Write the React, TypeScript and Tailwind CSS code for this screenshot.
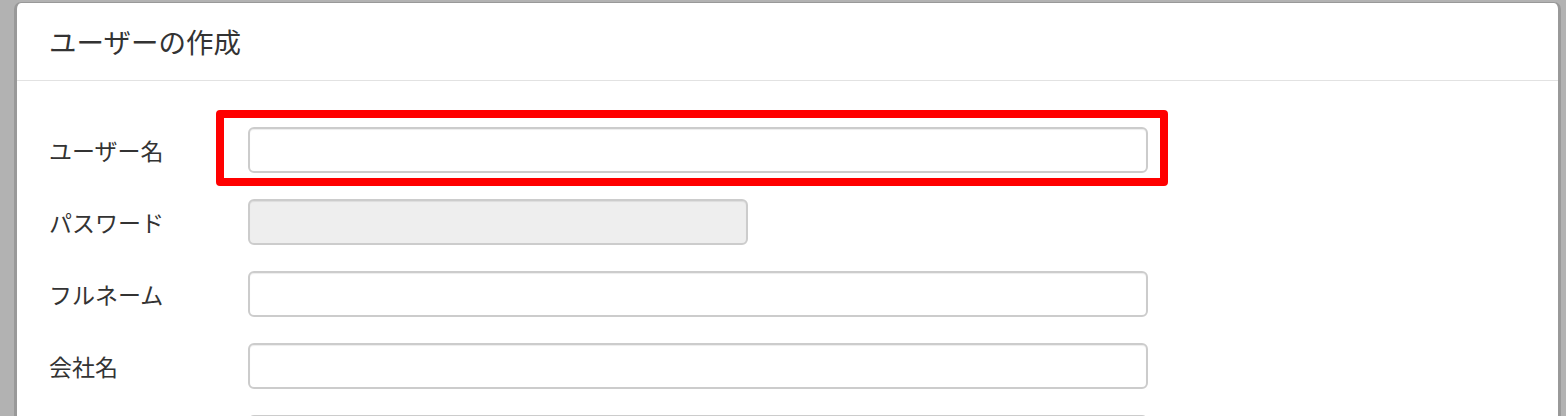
import React from 'react';

interface FieldRowProps {
  label: string;
  width: string;
  disabled?: boolean;
}

const FieldRow: React.FC<FieldRowProps> = ({ label, width, disabled }) => {
  return (
    <div className="flex items-center h-[46px]">
      <label className="w-[199px] shrink-0 text-[23px] leading-none text-[#333]">{label}</label>
      <input
        type="text"
        disabled={disabled}
        className={
          disabled
            ? `${width} h-[46px] rounded-[6px] border-2 border-[#cccccc] bg-[#eeeeee] shadow-[inset_0_1px_1px_rgba(0,0,0,0.075)]`
            : `${width} h-[46px] rounded-[6px] border-2 border-[#cccccc] bg-white shadow-[inset_0_1px_1px_rgba(0,0,0,0.075)]`
        }
      />
    </div>
  );
};

export default function App() {
  return (
    <div
      className="relative flex h-[416px] w-full overflow-hidden bg-[#b2b2b2]"
      style={{ fontFamily: '"Noto Sans CJK JP", "Noto Sans", sans-serif' }}
    >
      <div className="mt-[2px] ml-[14px] mr-[5px] flex-1 rounded-t-[7px] border-l-[3px] border-r-[3px] border-t border-[#999999] bg-white">
        <div className="flex h-[78px] items-center border-b border-[#e2e2e2] pl-[32px]">
          <h4 className="text-[27.5px] leading-none text-[#333]">ユーザーの作成</h4>
        </div>
        <div className="flex flex-col gap-[26px] pl-[32px] pt-[46px]">
          <FieldRow label="ユーザー名" width="w-[900px]" />
          <FieldRow label="パスワード" width="w-[500px]" disabled />
          <FieldRow label="フルネーム" width="w-[900px]" />
          <FieldRow label="会社名" width="w-[900px]" />
          <FieldRow label="" width="w-[900px]" />
        </div>
      </div>
      {/* annotation box */}
      <div className="pointer-events-none absolute left-[216px] top-[110px] h-[76px] w-[952px] rounded-[4px] border-[8px] border-[#ff0000]" />
    </div>
  );
}
